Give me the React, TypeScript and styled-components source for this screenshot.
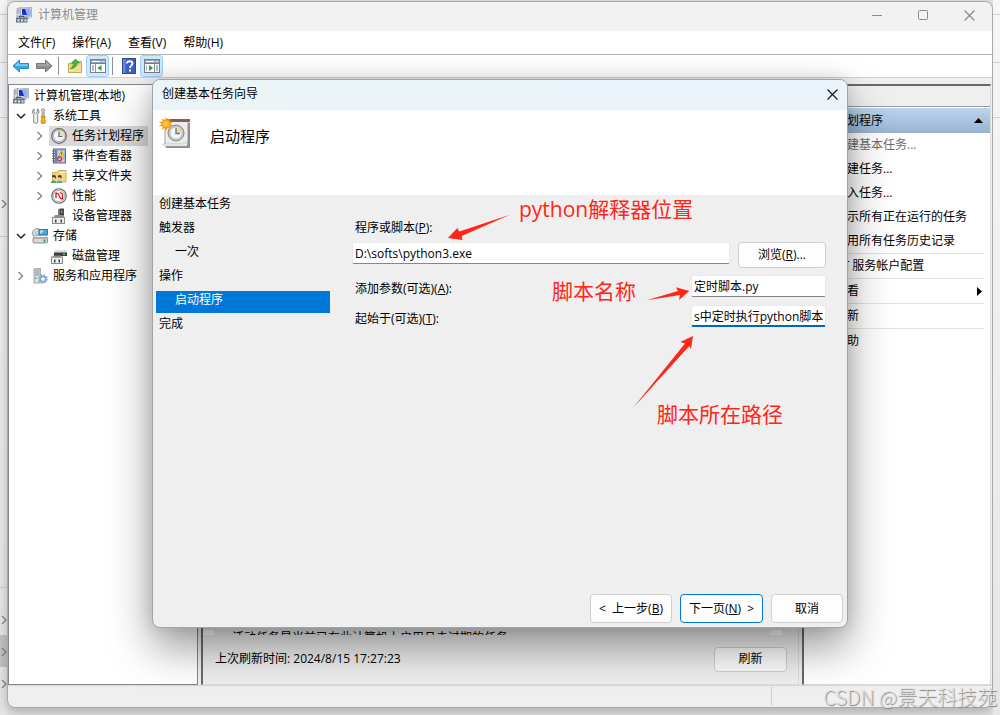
import React from "react";
import styled, { createGlobalStyle, css } from "styled-components";

const GlobalStyle = createGlobalStyle`
  * { box-sizing: border-box; }
  body {
    margin: 0;
    background: #ececec;
    color: #000;
    font-family: "Open Sans", "Noto Sans CJK SC", sans-serif;
    font-size: 12px;
    line-height: 16px;
  }
  button, input { font: inherit; color: inherit; }
  svg { display: block; flex: none; }
`;

/* ---------- desktop and the explorer window behind ---------- */

const Desktop = styled.div`
  position: relative;
  display: flex;
  min-height: 100vh;
  overflow: hidden;
  background: #e4e4e4;
`;

const Strip = styled.div`
  display: flex;
  flex-direction: column;
  flex: none;
  width: 7px;
  background: linear-gradient(#f6f6f6, #e6e6e6);
`;

const StripCell = styled.div<{ $h?: number; $active?: boolean; $line?: boolean }>`
  display: flex;
  flex-direction: column;
  justify-content: flex-end;
  align-items: center;
  padding-bottom: 10px;
  ${(p) => (p.$h ? `height: ${p.$h}px;` : "flex: 1;")}
  ${(p) => p.$active && "background: #c4c4c4;"}
  ${(p) => p.$line && "border-bottom: 1px solid #cfcfcf;"}
`;

/* ---------- main window ---------- */

const WindowArea = styled.div`
  display: flex;
  flex: 1;
  min-width: 0;
  padding: 1px 0 7px;
`;

const Window = styled.section`
  display: flex;
  flex-direction: column;
  flex: 1;
  min-width: 0;
  overflow: hidden;
  border: 1px solid #a9a9a9;
  border-radius: 8px;
  background: #efefef;
  box-shadow: 0 4px 12px rgba(0, 0, 0, 0.25);
`;

const TitleBar = styled.header`
  display: flex;
  align-items: center;
  height: 29px;
  padding: 0 12px 3px 8px;
  gap: 6px;
  background: #f2f2f2;
  color: #8b8b8b;
`;

const WindowTitle = styled.h1`
  flex: 1;
  margin: 0;
  font-size: 12px;
  font-weight: 400;
`;

const CaptionButton = styled.button`
  display: grid;
  place-items: center;
  width: 22px;
  height: 22px;
  padding: 0;
  border: 0;
  background: none;
`;

const Captions = styled.div`
  display: flex;
  gap: 24px;
`;

const MenuBar = styled.nav`
  display: flex;
  gap: 1px;
  height: 24px;
  padding-left: 2px;
  border-bottom: 1px solid #b4b4b4;
  background: #fff;
`;

const MenuButton = styled.button`
  padding: 0 8px;
  border: 0;
  background: none;
`;

const ToolBar = styled.div`
  display: flex;
  align-items: center;
  height: 23px;
  padding-left: 1px;
  border-bottom: 1px solid #d2d2d2;
  background: #fff;
`;

const ToolButton = styled.button<{ $on?: boolean }>`
  display: grid;
  place-items: center;
  width: 23px;
  height: 22px;
  padding: 0;
  border: 1px solid ${(p) => (p.$on ? "#99d1ff" : "transparent")};
  border-radius: 3px;
  background: ${(p) => (p.$on ? "#cfe8fc" : "none")};
`;

const ToolSeparator = styled.span`
  width: 1px;
  height: 18px;
  margin: 0 4px 0 3px;
  background: #8e8e8e;
`;

const Panels = styled.div`
  display: flex;
  flex: 1;
  gap: 3px;
  padding: 6px 1px 0 0;
`;

/* ---------- tree ---------- */

const TreePane = styled.aside`
  flex: none;
  width: 190px;
  padding-top: 1px;
  border: 1px solid #828790;
  background: #fff;
`;

const TreeRow = styled.div<{ $level: number }>`
  display: flex;
  gap: 1px;
  height: 20px;
  padding-left: ${(p) => (p.$level === 0 ? 2 : p.$level * 19 - 15)}px;
`;

const Twisty = styled.span`
  display: grid;
  place-items: center;
  width: 16px;
`;

const TreeLabel = styled.span<{ $selected?: boolean }>`
  display: flex;
  align-items: center;
  gap: 5px;
  padding: 0 4px 0 2px;
  white-space: nowrap;
  ${(p) => p.$selected && "background: #d9d9d9;"}
`;

/* ---------- centre pane ---------- */

const CentrePane = styled.main`
  display: flex;
  flex-direction: column;
  justify-content: flex-end;
  flex: 1;
  min-width: 0;
  border: 1px solid #dcdcdc;
  border-left: 2px solid #696969;
`;

const ClippedNote = styled.p`
  height: 5px;
  margin: 0 16px 0 0;
  padding-left: 18px;
  overflow: hidden;
  border: 0 solid #fff;
  border-width: 0 11px;
  white-space: nowrap;
`;

const RefreshRow = styled.div`
  display: flex;
  align-items: center;
  justify-content: space-between;
  height: 49px;
  padding: 0 11px 1px 12px;
`;

const PushButton = styled.button<{ $w: number; $h: number; $primary?: boolean }>`
  width: ${(p) => p.$w}px;
  height: ${(p) => p.$h}px;
  flex: none;
  padding: 0;
  border: 1px solid ${(p) => (p.$primary ? "#0078d4" : "#d0d0d0")};
  border-radius: 4px;
  background: #fdfdfd;
  white-space: pre;
`;

/* ---------- actions pane ---------- */

const ActionsPane = styled.aside`
  flex: none;
  width: 189px;
  border: 1px solid #dcdcdc;
  border-top: 2px solid #696969;
  border-left: 2px solid #696969;
  background: #fff;
`;

const ActionsTop = styled.div`
  height: 21px;
  margin-bottom: 1px;
  border-bottom: 1px solid #999;
  background: #efefef;
`;

const ActionsHeader = styled.h2`
  display: flex;
  align-items: center;
  justify-content: space-between;
  height: 25px;
  margin: 0;
  padding: 0 7px;
  background: linear-gradient(#bcd4ed, #98b3d2);
  font-size: 12px;
  font-weight: 400;
`;

const ActionButton = styled.button<{ $ruled?: boolean; $muted?: boolean }>`
  display: flex;
  align-items: center;
  justify-content: space-between;
  width: calc(100% - 6px);
  height: ${(p) => (p.$ruled ? 25 : 24)}px;
  padding: 0 2px 0 31px;
  border: 0;
  ${(p) => p.$ruled && "border-top: 1px solid #e3e3e3;"}
  background: none;
  text-align: left;
  white-space: nowrap;
  ${(p) => p.$muted && "color: #6d6d6d;"}
`;

const StatusBar = styled.footer`
  display: flex;
  justify-content: flex-end;
  height: 22px;
  padding: 1px 0;
  border-top: 1px solid #d7d7d7;
`;

const StatusCell = styled.span`
  width: 221px;
  border-left: 1px solid #d0d0d0;
`;

/* ---------- wizard ---------- */

const Dialog = styled.section`
  position: absolute;
  top: 79px;
  right: 152px;
  bottom: 87px;
  left: 152px;
  display: flex;
  flex-direction: column;
  border: 1px solid #a3a3a3;
  border-radius: 8px;
  background: #efefef;
  box-shadow: 0 20px 44px rgba(0, 0, 0, 0.4), 0 0 16px rgba(0, 0, 0, 0.12);
`;

const DialogTitle = styled.header`
  display: flex;
  align-items: center;
  justify-content: space-between;
  height: 30px;
  padding: 0 4px 2px 9px;
  border-radius: 7px 7px 0 0;
  background: linear-gradient(90deg, #eaf5f7, #ebf3fb);
`;

const DialogHeader = styled.div`
  display: flex;
  gap: 19px;
  height: 85px;
  padding: 7px 6px;
  background: #fff;
`;

const StepTitle = styled.h2`
  margin: 0;
  font-size: 15px;
  font-weight: 400;
  line-height: 38px;
`;

const DialogBody = styled.div`
  display: flex;
  flex: 1;
  padding-right: 21px;
`;

const Steps = styled.ol`
  flex: none;
  width: 174px;
  margin: 0 0 0 3px;
  padding: 0;
  list-style: none;
`;

const Step = styled.li<{ $sub?: boolean; $current?: boolean }>`
  height: 22px;
  margin-bottom: 2px;
  padding-left: ${(p) => (p.$sub ? 19 : 3)}px;
  line-height: 18px;
  ${(p) =>
    p.$current &&
    css`
      background: #0078d7;
      color: #fff;
    `}
`;

const Form = styled.form`
  display: flex;
  flex-direction: column;
  gap: 7px;
  flex: 1;
  padding: 24px 0 0 22px;
`;

const FieldRow = styled.div`
  display: flex;
  justify-content: space-between;
  gap: 8px;
`;

const Label = styled.label`
  padding: 5px 0 0 3px;
  line-height: 18px;
`;

const TopLabel = styled.label`
  height: 16px;
  padding-left: 3px;
  line-height: 18px;
`;

const TextInput = styled.input<{ $w?: number; $focus?: boolean }>`
  ${(p) => (p.$w ? `width: ${p.$w}px; flex: none;` : "flex: 1; min-width: 0;")}
  height: 22px;
  padding: 0 1px 0 2px;
  border: 1px solid #e8e8e8;
  border-bottom: ${(p) => (p.$focus ? "2px solid #0067c0" : "1px solid #868686")};
  border-radius: 2px;
  background: #fff;
  outline: 0;
`;

const DialogFooter = styled.footer`
  display: flex;
  justify-content: flex-end;
  gap: 8px;
  padding: 0 4px 4px;
`;

/* ---------- annotations ---------- */

const Arrows = styled.svg`
  position: absolute;
  top: 0;
  left: 0;
  pointer-events: none;
`;

const Note = styled.span<{ $x: number; $y: number }>`
  position: absolute;
  left: ${(p) => p.$x}px;
  top: ${(p) => p.$y}px;
  color: #ff2618;
  font-size: 21px;
  line-height: 28px;
  white-space: nowrap;
`;

const Watermark = styled.span`
  position: absolute;
  right: 3px;
  bottom: 4px;
  color: rgba(226, 226, 226, 0.9);
  font-family: "Noto Sans CJK SC", sans-serif;
  font-size: 20px;
  font-weight: 300;
  line-height: 28px;
  text-shadow: 1px 1px 1px #808080;
`;

/* ---------- icons ---------- */

const ComputerIcon = () => (
  <svg width="16" height="16" viewBox="0 0 16 16">
    <path d="M1 1.500l4-1V10H1z" fill="#d3d7dc" stroke="#8b929d" strokeWidth=".7" />
    <path d="M1.500 3.500l2-.4M1.500 5.500l2-.4" stroke="#6a7380" strokeWidth=".8" />
    <path d="M4.500 1l11-.5v9.500l-11-1z" fill="#dfe3e8" stroke="#9aa1ad" strokeWidth=".8" />
    <path d="M6 2l8.200-.3v6.800L6 7.700z" fill="#1830c4" />
    <path d="M9 2l5.200-.3v6.800L11 8z" fill="#8fb0f2" />
    <path d="M9 9.500h3l2 2.500H9z" fill="#b6bbc3" />
    <rect x="0" y="10.500" width="11.500" height="5" rx=".5" fill="#5d7182" />
    <path d="M3.500 10.500V9.300h4.500v1.200" fill="none" stroke="#3a444e" />
    <path d="M0 12.500h11.500" stroke="#8398a8" strokeWidth=".8" />
    <path d="M1.500 12.500h2v2h-2zM5 12.500h2v2H5zM8.500 12.500h2v2h-2z" fill="#dce5ec" />
  </svg>
);

const ToolsIcon = () => (
  <svg width="16" height="16" viewBox="0 0 16 16">
    <path d="M2 .8v3.500l1.700 1.200 1.700-1.200V.8c2 1.200 2 4 .3 5.500V14c0 1.800-4 1.800-4 0V6.300C-.1 5 .2 2 2 .8z" fill="#f2f2f2" stroke="#777" strokeWidth=".9" />
    <path d="M11 .7c2 0 2 2 1 3v5h-1.800v-5c-1-1-1-3 .8-3z" fill="#dcdcdc" stroke="#777" strokeWidth=".8" />
    <path d="M9.300 8.500h3.800v1.500l-.8 1 1 1V15c0 .8-4.200.8-4.200 0v-3l1-1-.8-1z" fill="#f5ae0f" stroke="#c07c05" strokeWidth=".7" />
  </svg>
);

const ClockIcon = () => (
  <svg width="16" height="16" viewBox="0 0 16 16">
    <circle cx="8" cy="8" r="7.300" fill="#d0d0d0" stroke="#6c6c6c" strokeWidth="1.200" />
    <circle cx="8" cy="8" r="5.600" fill="#f1f6fb" stroke="#a0a0a0" strokeWidth=".6" />
    <path d="M8 8V2.500A5.500 5.500 0 0 1 13.500 8z" fill="#f6dca6" />
    <path d="M8 3.500V8.500h3.500" fill="none" stroke="#4a6a8c" strokeWidth="1.200" />
  </svg>
);

const EventIcon = () => (
  <svg width="16" height="16" viewBox="0 0 16 16">
    <rect x="2.500" y="1" width="12" height="14" fill="#a9bfdc" stroke="#4d6a96" />
    <rect x="4" y="2" width="2" height="12" fill="#6581ad" />
    <path d="M1 3h3M1 5.500h3M1 8h3M1 10.500h3M1 13h3" stroke="#666" strokeWidth=".9" />
    <path d="M7 4h6M7 6h6M7 8h6M7 13h6" stroke="#edf3fa" strokeWidth=".8" />
    <path d="M10.500 2.500L13.500 8h-6z" fill="#ffd52b" stroke="#b58a00" strokeWidth=".5" />
    <path d="M10.500 4.500v2" stroke="#222" strokeWidth=".8" />
    <circle cx="8.500" cy="11" r="2.700" fill="#de3b38" />
    <path d="M7.500 10l2 2M9.500 10l-2 2" stroke="#fff" strokeWidth=".8" />
  </svg>
);

const SharedFolderIcon = () => (
  <svg width="16" height="16" viewBox="0 0 16 16">
    <path d="M1.500 4.500h5l1-2h7.500V14H1.500z" fill="#f5d680" stroke="#c09a48" strokeWidth=".8" />
    <path d="M8 4.500h6.500" stroke="#fff4c8" />
    <path d="M0 15c0-3.500 5.500-3.500 5.500 0z" fill="#35a86e" />
    <path d="M5.800 15c0-3.500 5.500-3.500 5.500 0z" fill="#3fa8c3" />
    <circle cx="3" cy="9" r="2" fill="#4a3526" />
    <circle cx="8.700" cy="9" r="2" fill="#4a3526" />
    <circle cx="2.600" cy="10.200" r="1.300" fill="#f4c9a0" />
    <circle cx="8.300" cy="10.200" r="1.300" fill="#f4c9a0" />
  </svg>
);

const PerformanceIcon = () => (
  <svg width="16" height="16" viewBox="0 0 16 16">
    <circle cx="8" cy="8" r="7.300" fill="#e4e4e4" stroke="#666" strokeWidth="1.100" />
    <circle cx="8" cy="8" r="5.600" fill="#fff" stroke="#999" strokeWidth=".7" />
    <path d="M5 10V5l2 .5 2.500 5 2 .5V6L9 4.500" fill="none" stroke="#cf1b1b" strokeWidth="1.300" />
  </svg>
);

const DeviceIcon = () => (
  <svg width="16" height="16" viewBox="0 0 16 16">
    <path d="M7 2l2-1.500h4V9H7z" fill="#484848" />
    <path d="M7 2l2-1.500V9H7z" fill="#777" />
    <rect x="10" y="3" width="1.500" height="1.500" fill="#58dd6b" />
    <path d="M4 7h9v3H2z" fill="#8c8c8c" />
    <rect x="1.500" y="9.500" width="12" height="6" fill="#ebebeb" stroke="#8a8a8a" />
    <path d="M4 11.500h1.500v3H4zM9.500 11.500H11v3H9.500z" fill="#444" />
  </svg>
);

const StorageIcon = () => (
  <svg width="16" height="16" viewBox="0 0 16 16">
    <circle cx="5" cy="5" r="4.500" fill="#d6dde2" stroke="#7f8a92" strokeWidth=".8" />
    <circle cx="5" cy="5" r="1.300" fill="#fff" stroke="#888" strokeWidth=".6" />
    <rect x="7" y="1.500" width="8.500" height="5.500" fill="#4ea7df" stroke="#235f8b" strokeWidth=".8" />
    <path d="M8 2.500h4l-3 3H8z" fill="#b7e3fa" />
    <path d="M1.500 10l1.500-2.500h11L15.500 10z" fill="#f4f4f4" stroke="#888" strokeWidth=".6" />
    <rect x="1" y="10" width="14.500" height="5" rx="1" fill="#d9d9d9" stroke="#777" strokeWidth=".8" />
    <rect x="11.500" y="11.500" width="2" height="2.500" fill="#25b33e" />
  </svg>
);

const DiskIcon = () => (
  <svg width="16" height="16" viewBox="0 0 16 16">
    <path d="M3 5l1.500-3H15l1 3z" fill="#dedede" />
    <rect x="3" y="4.500" width="13" height="3.500" fill="#3c3c3c" />
    <rect x="12" y="5.500" width="2" height="1.500" fill="#46dc59" />
    <rect x=".5" y="9" width="11" height="6.500" fill="#eee" stroke="#8a8a8a" />
    <path d="M2 7.500h8v2H2z" fill="#8c8c8c" />
    <path d="M3 11.500h1.500v3H3zM7.500 11.500H9v3H7.500z" fill="#444" />
  </svg>
);

const ServicesIcon = () => (
  <svg width="16" height="16" viewBox="0 0 16 16">
    <path d="M2 1l1-1h6v14l-1 1H2z" fill="#b8c0c4" />
    <rect x="2" y="1" width="6" height="14" fill="#dce2e4" stroke="#8a9499" strokeWidth=".8" />
    <path d="M3 3h4M3 5h4M3 7h4" stroke="#7f909a" />
    <rect x="3" y="9.500" width="1.500" height="1.500" fill="#34b34c" />
    <circle cx="11" cy="11" r="2.800" fill="none" stroke="#7fa9cc" strokeWidth="1.900" />
    <circle cx="11" cy="11" r="4.200" fill="none" stroke="#7fa9cc" strokeWidth="1.400" strokeDasharray="1.600 1.700" />
  </svg>
);

const TaskIcon = () => (
  <svg width="32" height="32" viewBox="0 0 32 32">
    <path d="M7 6h24v25H7z" fill="#8f8f8f" />
    <path d="M6 4h23v23l-1 2H6z" fill="#ededed" stroke="#8a8a8a" strokeWidth=".8" />
    <path d="M3.500 27h22l2.500-2v4H5.500z" fill="#fff" stroke="#aaa" strokeWidth=".6" />
    <rect x="7" y="2" width="24" height="3" fill="#8e5b4b" />
    <circle cx="17" cy="16" r="8" fill="#c5cacd" stroke="#888" />
    <circle cx="17" cy="16" r="6" fill="#f1f7fb" stroke="#aaa" strokeWidth=".6" />
    <path d="M17 16v-6a6 6 0 0 1 6 6z" fill="#f5d597" />
    <path d="M17 11v5.500h4" fill="none" stroke="#5d7d9e" strokeWidth="1.400" />
    <path d="M7 0l1.200 3L11 1.500l-.5 3 3.500.2-2.500 2.300L14 9l-3.300.3.8 3.200-3-1.500L7 14l-1.300-3-3 1.500.8-3.200L0 9l2.500-2L0 4.700l3.500-.2L3 1.500 5.700 3z" fill="#f5a313" />
    <circle cx="7" cy="7" r="2.800" fill="#ffc447" />
  </svg>
);

const BackArrow = () => (
  <svg width="18" height="16" viewBox="0 0 18 16">
    <path d="M1 8l6.500-6v3.500h9v5h-9V14z" fill="#35a8ea" stroke="#2b7cb8" strokeWidth=".9" />
    <path d="M3 7.800l3.700-3.500v2.200h9v1.300z" fill="#8fd8f9" />
  </svg>
);

const ForwardArrow = () => (
  <svg width="18" height="16" viewBox="0 0 18 16">
    <path d="M17 8l-6.500-6v3.500h-9v5h9V14z" fill="#8d8d8d" stroke="#707070" strokeWidth=".9" />
    <path d="M15 7.800l-3.700-3.500v2.200h-9v1.300z" fill="#b0b0b0" />
  </svg>
);

const FolderUpIcon = () => (
  <svg width="16" height="16" viewBox="0 0 16 16">
    <path d="M1.500 5.500h7l1-2h5v11h-13z" fill="#efcf80" stroke="#c9a455" />
    <path d="M2 8h12v6H2z" fill="#f5dc98" />
    <path d="M3 10.500c2.500-1 3.500-3 3.500-5.500h-2L8.500 1l4 4h-2.500c0 3.500-3 6-7 5.500z" fill="#43b92e" stroke="#2c8d1e" strokeWidth=".6" />
  </svg>
);

const PaneIcon = ({ right }: { right?: boolean }) => (
  <svg width="16" height="16" viewBox="0 0 16 16">
    <rect x=".5" y="1.500" width="15" height="13" fill="#fff" stroke="#777f88" />
    <rect x="1" y="2" width="14" height="3" fill="#9aa5b1" />
    <path d="M2 3.500h8M11.500 3.500h1M13.500 3.500h1" stroke="#fff" />
    <path d="M1 5.500h14" stroke="#777f88" />
    {right ? (
      <>
        <path d="M10.500 6v8" stroke="#8c949c" />
        <path d="M12 8h2M12 10h2M12 12h2M2 8h1M2 10h1M2 12h1" stroke="#4f80b2" />
        <path d="M5 7l4 3-4 3z" fill="#31a42e" />
      </>
    ) : (
      <>
        <path d="M5.500 6v8" stroke="#8c949c" />
        <path d="M2 8h2M2 10h2M2 12h2" stroke="#4f80b2" />
        <path d="M11.500 7v6l-4-3z" fill="#31a42e" />
      </>
    )}
  </svg>
);

const HelpIcon = () => (
  <svg width="14" height="16" viewBox="0 0 14 16">
    <rect x=".5" y=".5" width="13" height="15" fill="#3f5fc0" stroke="#2b4a9c" />
    <path d="M1 1h2.500v14H1z" fill="#6a87d2" />
    <path d="M5 5.500C5 2.500 10.500 2.500 10.500 5.500 10.500 7.500 8 7.500 8 10" fill="none" stroke="#fff" strokeWidth="1.800" />
    <rect x="7" y="11.500" width="2" height="2" fill="#fff" />
  </svg>
);

const Chevron = ({ open }: { open?: boolean }) => (
  <svg width="10" height="10" viewBox="0 0 10 10">
    <path
      d={open ? "M1 3l4 4 4-4" : "M2.500 1l4 4-4 4"}
      fill="none"
      stroke={open ? "#222" : "#8c8c8c"}
      strokeWidth="1.500"
    />
  </svg>
);

const StripChevron = () => (
  <svg width="6" height="10" viewBox="0 0 6 10">
    <path d="M1 1l4 4-4 4" fill="none" stroke="#858585" strokeWidth="1.300" />
  </svg>
);

const CloseGlyph = ({ color }: { color: string }) => (
  <svg width="11" height="11" viewBox="0 0 11 11">
    <path d="M.5.5l10 10M10.500.5l-10 10" stroke={color} strokeWidth="1.200" />
  </svg>
);

/* ---------- data ---------- */

type Node = { level: number; text: string; Icon: React.FC; state?: "open" | "closed"; selected?: boolean };

const tree: Node[] = [
  { level: 0, text: "计算机管理(本地)", Icon: ComputerIcon },
  { level: 1, text: "系统工具", Icon: ToolsIcon, state: "open" },
  { level: 2, text: "任务计划程序", Icon: ClockIcon, state: "closed", selected: true },
  { level: 2, text: "事件查看器", Icon: EventIcon, state: "closed" },
  { level: 2, text: "共享文件夹", Icon: SharedFolderIcon, state: "closed" },
  { level: 2, text: "性能", Icon: PerformanceIcon, state: "closed" },
  { level: 2, text: "设备管理器", Icon: DeviceIcon },
  { level: 1, text: "存储", Icon: StorageIcon, state: "open" },
  { level: 2, text: "磁盘管理", Icon: DiskIcon },
  { level: 1, text: "服务和应用程序", Icon: ServicesIcon, state: "closed" },
];

const actions = [
  { text: "创建基本任务...", muted: true },
  { text: "创建任务..." },
  { text: "导入任务..." },
  { text: "显示所有正在运行的任务" },
  { text: "启用所有任务历史记录" },
  { text: "AT 服务帐户配置", ruled: true },
  { text: "查看", ruled: true, submenu: true },
  { text: "刷新", ruled: true },
  { text: "帮助", ruled: true },
];

const steps = [
  { text: "创建基本任务" },
  { text: "触发器" },
  { text: "一次", sub: true },
  { text: "操作" },
  { text: "启动程序", sub: true, current: true },
  { text: "完成" },
];

export default function App() {
  return (
    <>
      <GlobalStyle />
      <Desktop>
        <Strip>
          <StripCell $h={15} $line />
          <StripCell $h={48} $line />
          <StripCell $h={55} $line />
          <StripCell $h={101}>
            <StripChevron />
          </StripCell>
          <StripCell $h={18} $line />
          <StripCell $line />
          <StripCell $h={47}>
            <StripChevron />
          </StripCell>
          <StripCell $h={32} $active>
            <StripChevron />
          </StripCell>
          <StripCell $h={32}>
            <StripChevron />
          </StripCell>
          <StripCell $h={16} />
        </Strip>
        <WindowArea>
          <Window>
            <TitleBar>
              <ComputerIcon />
              <WindowTitle>计算机管理</WindowTitle>
              <Captions>
                <CaptionButton aria-label="最小化">
                  <svg width="10" height="10" viewBox="0 0 10 10">
                    <path d="M0 5.500h10" stroke="#8a8a8a" />
                  </svg>
                </CaptionButton>
                <CaptionButton aria-label="最大化">
                  <svg width="10" height="10" viewBox="0 0 10 10">
                    <rect x=".5" y=".5" width="9" height="9" rx="1" fill="none" stroke="#8a8a8a" />
                  </svg>
                </CaptionButton>
                <CaptionButton aria-label="关闭">
                  <CloseGlyph color="#8a8a8a" />
                </CaptionButton>
              </Captions>
            </TitleBar>
            <MenuBar>
              {["文件(F)", "操作(A)", "查看(V)", "帮助(H)"].map((m) => (
                <MenuButton key={m}>{m}</MenuButton>
              ))}
            </MenuBar>
            <ToolBar>
              <ToolButton aria-label="后退">
                <BackArrow />
              </ToolButton>
              <ToolButton aria-label="前进">
                <ForwardArrow />
              </ToolButton>
              <ToolSeparator />
              <ToolButton aria-label="上移">
                <FolderUpIcon />
              </ToolButton>
              <ToolButton aria-label="显示/隐藏控制台树" $on>
                <PaneIcon />
              </ToolButton>
              <ToolSeparator />
              <ToolButton aria-label="帮助">
                <HelpIcon />
              </ToolButton>
              <ToolButton aria-label="显示/隐藏操作窗格" $on>
                <PaneIcon right />
              </ToolButton>
            </ToolBar>
            <Panels>
              <TreePane>
                {tree.map(({ level, text, Icon, state, selected }) => (
                  <TreeRow key={text} $level={level}>
                    {level > 0 && <Twisty>{state && <Chevron open={state === "open"} />}</Twisty>}
                    <TreeLabel $selected={selected}>
                      <Icon />
                      {text}
                    </TreeLabel>
                  </TreeRow>
                ))}
              </TreePane>
              <CentrePane>
                <ClippedNote>活动任务是当前已在此计算机上启用且未过期的任务</ClippedNote>
                <RefreshRow>
                  <span>上次刷新时间: 2024/8/15 17:27:23</span>
                  <PushButton $w={73} $h={25}>
                    刷新
                  </PushButton>
                </RefreshRow>
              </CentrePane>
              <ActionsPane>
                <ActionsTop />
                <ActionsHeader>
                  任务计划程序
                  <svg width="9" height="5" viewBox="0 0 9 5">
                    <path d="M0 5l4.500-5L9 5z" fill="#000" />
                  </svg>
                </ActionsHeader>
                {actions.map((a) => (
                  <ActionButton key={a.text} $ruled={a.ruled} $muted={a.muted}>
                    {a.text}
                    {a.submenu && (
                      <svg width="5" height="9" viewBox="0 0 5 9">
                        <path d="M0 0l5 4.500L0 9z" fill="#000" />
                      </svg>
                    )}
                  </ActionButton>
                ))}
              </ActionsPane>
            </Panels>
            <StatusBar>
              <StatusCell />
            </StatusBar>
          </Window>
        </WindowArea>
        <Strip>
          <StripCell $h={15} $line />
          <StripCell $h={48} $line />
          <StripCell $h={55} $line />
          <StripCell />
        </Strip>

        <Dialog role="dialog" aria-label="创建基本任务向导">
          <DialogTitle>
            创建基本任务向导
            <CaptionButton aria-label="关闭向导">
              <CloseGlyph color="#1a1a1a" />
            </CaptionButton>
          </DialogTitle>
          <DialogHeader>
            <TaskIcon />
            <StepTitle>启动程序</StepTitle>
          </DialogHeader>
          <DialogBody>
            <Steps>
              {steps.map((s) => (
                <Step key={s.text} $sub={s.sub} $current={s.current}>
                  {s.text}
                </Step>
              ))}
            </Steps>
            <Form>
              <TopLabel htmlFor="program">
                程序或脚本(<u>P</u>):
              </TopLabel>
              <FieldRow>
                <TextInput id="program" defaultValue="D:\softs\python3.exe" />
                <PushButton type="button" $w={88} $h={26}>
                  浏览(<u>R</u>)...
                </PushButton>
              </FieldRow>
              <FieldRow>
                <Label htmlFor="args">
                  添加参数(可选)(<u>A</u>):
                </Label>
                <TextInput id="args" $w={135} defaultValue="定时脚本.py" />
              </FieldRow>
              <FieldRow>
                <Label htmlFor="start">
                  起始于(可选)(<u>T</u>):
                </Label>
                <TextInput id="start" $w={135} $focus defaultValue="s中定时执行python脚本" />
              </FieldRow>
            </Form>
          </DialogBody>
          <DialogFooter>
            <PushButton $w={82} $h={29}>
              {"<  上一步("}
              <u>B</u>)
            </PushButton>
            <PushButton $w={83} $h={29} $primary>
              下一页(<u>N</u>
              {")  >"}
            </PushButton>
            <PushButton $w={72} $h={29}>
              取消
            </PushButton>
          </DialogFooter>

          <Arrows width="694" height="548" viewBox="153 80 694 548" fill="#ff2618">
            <path d="M448 238l9.300-10 2 3.600L510 214.700 461.700 236l.8 4z" />
            <path d="M689.300 291L676 287.300l2 3.700-31.300 9.300L680 295l-1 5z" />
            <path d="M693 336l-12.700 6 4.700 1.500-52.300 64.800L689.300 346l1.700 3z" />
          </Arrows>
          <Note $x={366} $y={115}>python解释器位置</Note>
          <Note $x={399} $y={197}>脚本名称</Note>
          <Note $x={504} $y={320}>脚本所在路径</Note>
        </Dialog>
        <Watermark>CSDN @景天科技苑</Watermark>
      </Desktop>
    </>
  );
}
